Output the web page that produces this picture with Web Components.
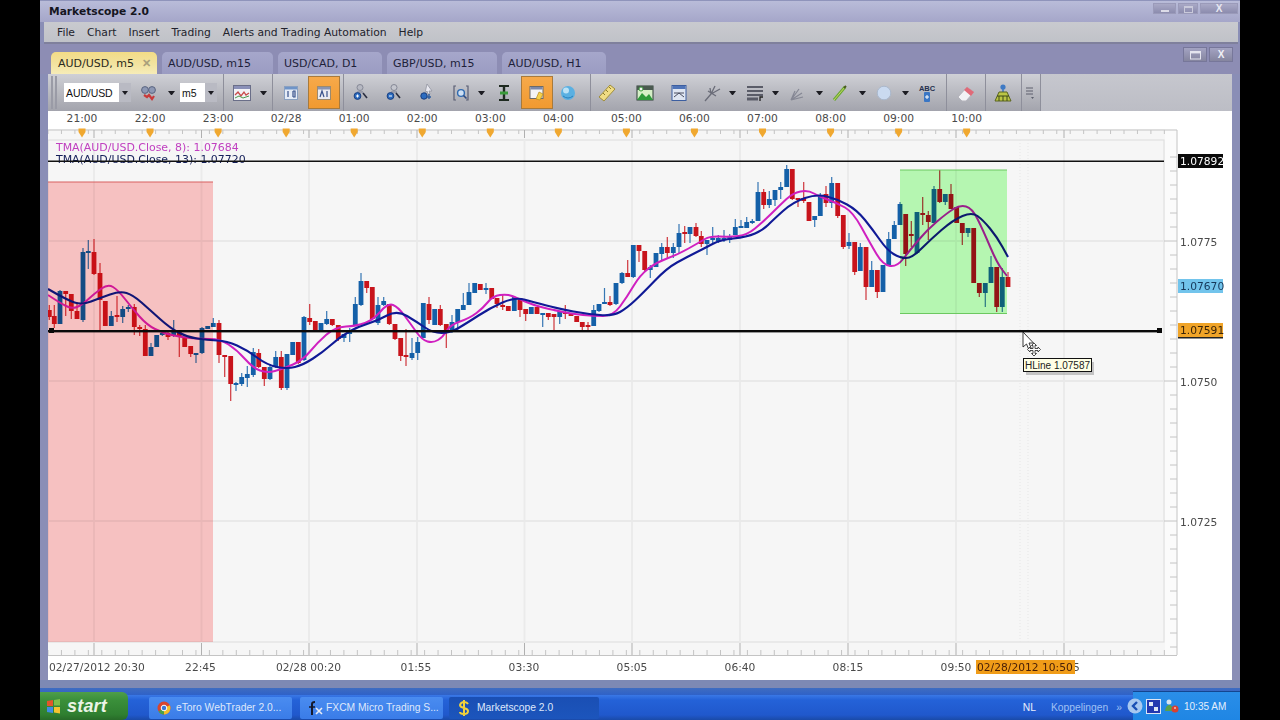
<!DOCTYPE html>
<html>
<head>
<meta charset="utf-8">
<title>Marketscope 2.0</title>
<style>
  html, body { margin: 0; height: 720px; overflow: hidden; background: #000; }
</style>
</head>
<body>
<ms-app>
  <ms-titlebar>Marketscope 2.0</ms-titlebar>
  <ms-menubar>
    <ms-menu>File</ms-menu><ms-menu>Chart</ms-menu><ms-menu>Insert</ms-menu><ms-menu>Trading</ms-menu><ms-menu>Alerts and Trading Automation</ms-menu><ms-menu>Help</ms-menu>
  </ms-menubar>
  <ms-tabstrip>
    <ms-tab active>AUD/USD, m5</ms-tab>
    <ms-tab style="width:111px">AUD/USD, m15</ms-tab>
    <ms-tab style="width:104px">USD/CAD, D1</ms-tab>
    <ms-tab style="width:110px">GBP/USD, m15</ms-tab>
    <ms-tab style="width:104px">AUD/USD, H1</ms-tab>
  </ms-tabstrip>
  <ms-toolbar></ms-toolbar>
  <ms-chart></ms-chart>
</ms-app>
<ms-taskbar></ms-taskbar>

<script>
/* eslint-disable no-undef */
const UI_FONT = `"DejaVu Sans", sans-serif`;

class MsApp extends HTMLElement {
  constructor() {
    super();
    this.attachShadow({ mode: 'open' }).innerHTML = `
      <style>
        :host { display: block; width: 1200px; height: 695px; margin: 0 40px; background: #8a8eb6; position: relative; }
        .foot { height: 15px; background: linear-gradient(#7d89b4 0, #7d89b4 8px, #3f6cc0 8px, #2f62c8 15px); }
      </style>
      <slot></slot>
      <div class="foot"></div>`;
  }
}

class MsTitlebar extends HTMLElement {
  constructor() {
    super();
    this.attachShadow({ mode: 'open' }).innerHTML = `
      <style>
        :host { display: flex; align-items: center; height: 22px; box-sizing: border-box; padding-left: 9px;
          background: linear-gradient(#b9bcd9, #a5a6c9); border-top: 1px solid #8f94bb;
          font: bold 10.7px ${UI_FONT}; color: #15151f; }
        .btns { margin-left: auto; margin-right: 2px; margin-top: -6px; display: flex; gap: 2px; }
        .b { height: 11px; background: linear-gradient(#a9a9c6, #8c8cae); border: 1px solid #9a9ab9; box-sizing: border-box;
          display: flex; align-items: center; justify-content: center; color: #e8e8f2; font: bold 10px "Liberation Sans", sans-serif; }
      </style>
      <slot></slot>
      <div class="btns">
        <div class="b" style="width:23px"><svg width="10" height="9"><rect x="1" y="6" width="8" height="2" fill="#dcdce8"/></svg></div>
        <div class="b" style="width:20px"><svg width="11" height="9"><rect x="1.5" y="2.5" width="8" height="6" fill="none" stroke="#c9c9da"/><rect x="1" y="2" width="9" height="2" fill="#c9c9da"/></svg></div>
        <div class="b" style="width:38px">X</div>
      </div>`;
  }
}

class MsMenubar extends HTMLElement {
  constructor() {
    super();
    this.attachShadow({ mode: 'open' }).innerHTML = `
      <style>
        :host { display: flex; align-items: center; height: 22px; box-sizing: border-box; margin: 0 2px 0 4px; padding-left: 13px; gap: 12px;
          background: linear-gradient(#c9cacf, #c0c2c8); border-bottom: 2px solid #7f809c; }
      </style>
      <slot></slot>`;
  }
}

class MsMenu extends HTMLElement {
  constructor() {
    super();
    this.attachShadow({ mode: 'open' }).innerHTML = `
      <style>:host { display: block; font: 10.75px ${UI_FONT}; color: #22232c; white-space: nowrap; }</style>
      <slot></slot>`;
  }
}

class MsTabstrip extends HTMLElement {
  constructor() {
    super();
    this.attachShadow({ mode: 'open' }).innerHTML = `
      <style>
        :host { display: flex; align-items: flex-end; height: 30px; padding-left: 11px; gap: 5px; background: #8d8db4; position: relative; }
        .ctl { margin-left: auto; margin-right: 7px; align-self: flex-start; margin-top: 3px; display: flex; gap: 2px; }
        .c { width: 24px; height: 15px; background: linear-gradient(#a3a3c2, #85859f); border: 1px solid #77779a; box-sizing: border-box;
          display: flex; align-items: center; justify-content: center; color: #f0f0f6; font: bold 10px "Liberation Sans", sans-serif; }
      </style>
      <slot></slot>
      <div class="ctl">
        <div class="c"><svg width="13" height="10"><rect x="1.5" y="1.5" width="10" height="7.5" fill="none" stroke="#e4e4ee"/><rect x="1" y="1" width="11" height="2.4" fill="#e4e4ee"/></svg></div>
        <div class="c">X</div>
      </div>`;
  }
}

class MsTab extends HTMLElement {
  constructor() {
    super();
    this.attachShadow({ mode: 'open' }).innerHTML = `
      <style>
        :host { display: flex; align-items: center; box-sizing: border-box; width: 106px; height: 22px; padding-left: 6px;
          border-radius: 5px 5px 0 0; background: linear-gradient(#a6a7cb, #9b9cc2); color: #1e1f3a; font: 11px ${UI_FONT}; white-space: nowrap; }
        :host([active]) { background: linear-gradient(#f3dc86, #f2e3a0 55%, #f6ecb8); padding-left: 7px; color: #2a2a20; }
        .x { display: none; margin-left: 8px; color: #a8a07c; font: bold 11px "Liberation Sans", sans-serif; }
        :host([active]) .x { display: block; }
      </style>
      <slot></slot><span class="x">✕</span>`;
  }
}

const ICONS = {
  glasses: `<circle cx="6" cy="7" r="3.4" fill="#8d98b4" stroke="#5a6480"/><circle cx="13" cy="7" r="3.4" fill="#8d98b4" stroke="#5a6480"/><path d="M5 12l3 2 2-2 3 4 2-3" fill="none" stroke="#c83a3a" stroke-width="2.2"/>`,
  linechart: `<rect x="1.5" y="2.5" width="17" height="15" fill="#f2f2f6" stroke="#6a6e88"/><rect x="2" y="3" width="16" height="3" fill="#8a90b8"/><path d="M3 12l3-3 3 4 3-4 2 3 3-2" fill="none" stroke="#c84a4a" stroke-width="1.3"/><path d="M3 15l4-2 4 2 6-2" fill="none" stroke="#4a9a4a"/>`,
  boxb: `<rect x="3.5" y="3.5" width="13" height="13" fill="#e6ecf6" stroke="#8aa0c0"/><rect x="4" y="4" width="12" height="2.5" fill="#6f94c8"/><path d="M7 8v6M12 8v6M12 8h2v6h-2" fill="none" stroke="#37508a" stroke-width="1.2"/>`,
  boxa: `<rect x="3.5" y="3.5" width="13" height="13" fill="#eaeaf0" stroke="#9a8a70"/><rect x="4" y="4" width="12" height="2.5" fill="#8a94b0"/><path d="M6 14l2-6 2 6M13 8v6" fill="none" stroke="#37508a" stroke-width="1.2"/>`,
  zoomin: `<circle cx="9" cy="4.5" r="3" fill="#b6b8c2" stroke="#858896"/><path d="M6 9h6" stroke="#9a9caa" stroke-width="2"/><circle cx="6.5" cy="13" r="3.4" fill="#2c6cc0" stroke="#1a3f80"/><path d="M5 13h3M6.500 11.500v3" stroke="#fff"/><path d="M12 10l4 5" stroke="#2a2d40" stroke-width="1.6"/>`,
  zoomout: `<circle cx="10" cy="4.5" r="3" fill="#c4c6ce" stroke="#858896"/><path d="M7 9h6" stroke="#9a9caa" stroke-width="2"/><circle cx="6.5" cy="13" r="3.4" fill="#2c6cc0" stroke="#1a3f80"/><path d="M5 13h3" stroke="#fff"/><path d="M12 10l4 5" stroke="#2a2d40" stroke-width="1.6"/>`,
  pointer: `<path d="M10 1l5 7-3 0 1 3-2 0-1-3-2 2z" fill="#e8e8f0" stroke="#8a8c9a" stroke-width=".7"/><circle cx="7" cy="13" r="3.2" fill="#2c6cc0" stroke="#1a3f80"/><path d="M12 11v5M10 14h4" stroke="#2f5ea0" stroke-width="1.4"/>`,
  bracket: `<path d="M5 3H3v14h2M15 3h2v14h-2" fill="none" stroke="#5a5e74" stroke-width="1.2"/><circle cx="10" cy="10" r="3.4" fill="#cfe0f4" stroke="#2f6ab0" stroke-width="1.4"/><path d="M12.500 12.500l3 3" stroke="#2f4a80" stroke-width="1.6"/>`,
  ibeam: `<path d="M5 3h10M5 17h10" stroke="#1e2a20" stroke-width="2"/><path d="M10 3v14" stroke="#1e2a20" stroke-width="2.4"/><path d="M6 10h8" stroke="#3a9a3a" stroke-width="3"/>`,
  note: `<rect x="3" y="3.500" width="13" height="12" fill="#f4f4f4" stroke="#6a6a6a"/><rect x="3.500" y="4" width="12" height="2.500" fill="#7d88a8"/><path d="M9 16l3-7 4 2-3 6z" fill="#f6d24c" stroke="#b88a18" stroke-width=".7"/>`,
  globe: `<circle cx="10" cy="10" r="7" fill="#5ab0e2"/><circle cx="8" cy="7.500" r="3" fill="#bce2f6"/><path d="M5 13q5 4 10 0" stroke="#2b80bc" fill="none"/>`,
  ruler: `<path d="M2 14L13 2l5 4L7 18z" fill="#f0dc84" stroke="#a08e3c"/><path d="M6 10l2 2M9 7l2 2M12 4l2 2" stroke="#8e7c2c"/>`,
  picture: `<rect x="2" y="3" width="16" height="14" fill="#d6efc8" stroke="#2d3e34"/><rect x="2" y="3" width="16" height="4" fill="#4a5a50"/><path d="M2 17l5-7 4 4 3-3 4 6z" fill="#2f9a3c"/><circle cx="6" cy="6" r="2" fill="#f4f4f4" stroke="#3a9a3a"/>`,
  winchart: `<rect x="3" y="2.500" width="14" height="15" fill="#dfe6f2" stroke="#3c5ea0"/><rect x="3.500" y="3" width="13" height="3" fill="#4f74b8"/><path d="M5 14l5-4 5 4M5 10h10" fill="none" stroke="#4a4e60"/>`,
  fork: `<path d="M3 18L9 11M9 11L8 5M9 11L13 3M9 11L18 6M6 8L14 13" fill="none" stroke="#6a6c78" stroke-width="1.3"/>`,
  lines: `<path d="M2 4h16M2 8h16M2 12h16" stroke="#5a5c68" stroke-width="2"/><path d="M2 16h11" stroke="#5a5c68" stroke-width="3"/><path d="M15 18v-4h3" fill="none" stroke="#222" stroke-width="1.3"/>`,
  fan: `<path d="M4 17L8 8M4 17L12 6M4 17L15 10M4 17L16 14" fill="none" stroke="#858794" stroke-width="1.2"/>`,
  pencil: `<path d="M4 17L15 4" stroke="#6aa834" stroke-width="3"/><path d="M4 17L15 4" stroke="#c6d860" stroke-width="1"/><path d="M14 5l2-2" stroke="#485a20" stroke-width="2"/>`,
  ellipse: `<circle cx="10" cy="10" r="6.800" fill="#cadaf0" stroke="#aab8cc"/>`,
  abc: `<text x="10" y="8" text-anchor="middle" font-family="Liberation Sans" font-weight="bold" font-size="7.500" fill="#26304e">ABC</text><rect x="7" y="9" width="6" height="10" rx="1" fill="#3a76c4"/><path d="M8 14h4M10 12v4" stroke="#fff"/>`,
  eraser: `<path d="M2 14L11 4l7 5-8 9H6z" fill="#f2f2f4" stroke="#b4b4bc"/><path d="M8 7l3-3 7 5-3 4z" fill="#e06a78"/>`,
  pyramid: `<circle cx="10" cy="4" r="2.600" fill="#3f7ac4"/><path d="M10 6v3" stroke="#3f7ac4" stroke-width="1.600"/><path d="M6 9h8l4 9H2z" fill="#bcc644" stroke="#5a6420"/><path d="M6 13v5M10 13v5M14 13v5M4 13h12" stroke="#3e4a18"/>`,
  list: `<path d="M6 5h7M6 8h7M6 11h7" stroke="#5c5e6c"/><path d="M11 14h3l-1.500 2z" fill="#5c5e6c"/>`,
};

// centre x of each toolbar item on the page
const TOOLS = [
  ['grip', 52], ['grip', 56],
  ['combo', 97.5, 'AUD/USD', 67], ['icon', 149, 'glasses'], ['caret', 171],
  ['combo', 198.5, 'm5', 37], ['sep', 223],
  ['icon', 242, 'linechart'], ['caret', 263], ['sep', 272],
  ['icon', 291, 'boxb'], ['active', 324, 'boxa'], ['sep', 343],
  ['icon', 361, 'zoomin'], ['icon', 394, 'zoomout'], ['icon', 427, 'pointer'],
  ['icon', 461, 'bracket'], ['caret', 481], ['icon', 504, 'ibeam'],
  ['active', 537, 'note'], ['icon', 568, 'globe'], ['sep', 590],
  ['icon', 607, 'ruler'], ['icon', 645, 'picture'], ['icon', 679, 'winchart'],
  ['icon', 712, 'fork'], ['caret', 732], ['icon', 755, 'lines'], ['caret', 775],
  ['icon', 797, 'fan'], ['caret', 819], ['icon', 840, 'pencil'], ['caret', 862],
  ['icon', 884, 'ellipse'], ['caret', 905], ['icon', 927, 'abc'], ['sep', 946],
  ['icon', 966, 'eraser'], ['sep', 985], ['icon', 1003, 'pyramid'], ['sep', 1021],
  ['icon', 1030, 'list'], ['sep', 1040],
];
const TOOL_W = { grip: 2, icon: 20, active: 32, caret: 7, sep: 1 };

class MsToolbar extends HTMLElement {
  constructor() {
    super();
    let right = 48;
    const items = TOOLS.map(([kind, cx, arg, w]) => {
      const width = kind === 'combo' ? w : TOOL_W[kind];
      const left = cx - width / 2;
      const style = `margin-left:${left - right}px;width:${width}px`;
      right = left + width;
      if (kind === 'combo') return `<div class="combo" style="${style}"><span>${arg}</span><i></i></div>`;
      if (kind === 'icon' || kind === 'active') {
        return `<div class="${kind}" style="${style}"><svg width="20" height="20" viewBox="0 0 20 20">${ICONS[arg]}</svg></div>`;
      }
      return `<div class="${kind}" style="${style}"></div>`;
    }).join('');
    this.attachShadow({ mode: 'open' }).innerHTML = `
      <style>
        :host { display: block; height: 37px; margin: 0 8px; background: linear-gradient(#c6c7ce, #bcbdc5); }
        .row { display: flex; align-items: center; height: 37px; width: 992px; background: linear-gradient(#cfd0d6, #b4b5bc 60%, #a3a4ad); }
        .row > * { flex: none; box-sizing: border-box; }
        .grip { height: 33px; background: #9a9ba6; }
        .sep { align-self: stretch; background: #8e8f9b; }
        .icon { height: 20px; display: flex; justify-content: center; }
        .active { height: 33px; display: flex; align-items: center; justify-content: center; background: linear-gradient(#f6a94a, #f19a30); border: 1px solid #a87a3c; }
        .caret { height: 0; border-left: 3.5px solid transparent; border-right: 3.500px solid transparent; border-top: 4px solid #1c1c22; }
        .combo { height: 19px; background: #fff; display: flex; align-items: center; font: 10.5px "Liberation Sans", sans-serif; color: #111; padding-left: 2px; position: relative; }
        .combo span { letter-spacing: -.1px; }
        .combo i { position: absolute; right: 0; top: 0; bottom: 0; width: 12px; background: #b9bac3; }
        .combo i::after { content: ''; position: absolute; left: 3px; top: 8px; border-left: 3px solid transparent; border-right: 3px solid transparent; border-top: 4px solid #1c1c22; }
        svg { display: block; overflow: visible; }
      </style>
      <div class="row">${items}</div>`;
  }
}

// x, body top, body bottom, wick top, wick bottom, r(ed)/b(lue)
const CANDLES = [
  [49.3,310,317,305,320,'r'],[54.3,316,324,305,328,'r'],[60,291,324,290,324,'b'],[65.7,291,294,291,316,'r'],
  [71.3,294,311,294,319,'r'],[77,311,319,302,319,'r'],[83,252,320,248,322,'b'],[88.3,251,253,240,269,'b'],
  [94,252,274,239,275,'r'],[100,273,300,263,330,'r'],[105.3,301,326,301,326,'r'],[111.3,316,326,311,326,'b'],
  [117,315,317,296,322,'r'],[122.7,309,317,306,323,'b'],[128.3,307,309,305,312,'b'],[134.3,307,327,304,335,'r'],
  [139.7,327,329,325,336,'r'],[145.3,329,356,325,356,'r'],[151,347,356,343,356,'b'],[156.7,335,347,335,347,'b'],
  [162.3,333,335,333,336,'b'],[168,333,337,332,340,'r'],[173.7,331,335,320,337,'b'],[179.300,332,336,330,357,'r'],
  [184.700,337,347,337,347,'r'],[190.700,346,354,346,357,'r'],[196,353,355,353,363,'b'],[202,328,353,327,354,'b'],
  [207.700,326,329,326,329,'b'],[213.300,323,327,318,327,'b'],[219,323,355,320,363,'r'],[224.700,355,357,355,377,'r'],
  [230.700,356,384,356,401,'r'],[236,383,385,382,391,'b'],[241.700,377,384,373,386,'b'],[247.300,374,378,366,387,'b'],
  [253.300,352,375,348,377,'b'],[258.700,353,367,349,368,'r'],[264.300,367,379,367,386,'r'],[270,367,379,364,380,'b'],
  [275.700,357,367,351,368,'b'],[281.300,357,388,351,390,'r'],[287,354,388,354,390,'b'],[292.700,342,355,342,355,'b'],
  [298.300,342,363,342,364,'r'],[304,317,360,316,361,'b'],[309.700,318,322,304,325,'r'],[315.300,321,330,321,330,'r'],
  [321,323,330,323,331,'b'],[326.700,319,324,311,325,'b'],[332.300,319,325,319,326,'r'],[338.300,325,339,325,341,'r'],
  [344,334,338,334,342,'b'],[349.700,330,334,328,342,'b'],[355.300,304,325,297,326,'b'],[361,281,305,273,306,'b'],
  [366.700,281,288,281,293,'r'],[372.300,287,319,287,320,'r'],[378,305,323,297,325,'b'],[383.700,301,305,297,306,'b'],
  [389.300,304,324,304,325,'r'],[395,324,339,324,340,'r'],[400.700,338,356,338,361,'r'],[406,355,357,329,366,'r'],
  [412,353,358,338,360,'b'],[417.700,342,353,337,360,'b'],[423.300,303,338,303,338,'b'],[429,304,320,297,324,'r'],
  [434.700,309,325,309,325,'b'],[440.300,309,325,305,326,'r'],[446.300,324,331,324,348,'r'],[452,322,330,315,333,'b'],
  [457.700,309,322,309,330,'b'],[463.300,305,310,293,310,'b'],[469,292,305,283,305,'b'],[474.700,283,293,283,293,'b'],
  [480.300,284,290,284,290,'r'],[486,288,290,283,294,'b'],[491.700,288,299,288,299,'r'],[497,298,304,298,308,'r'],
  [502.700,305,307,295,310,'r'],[508.300,306,311,306,311,'r'],[514.300,297,311,297,311,'b'],[520,298,310,298,317,'r'],
  [525.700,309,314,309,321,'r'],[531.300,307,314,307,314,'b'],[537,307,314,307,314,'r'],[542.700,313,315,313,327,'b'],
  [548.300,313,317,313,320,'r'],[554,314,317,314,332,'r'],[559.700,311,317,311,324,'b'],[565.300,312,314,305,319,'r'],
  [571,313,316,313,316,'r'],[576.700,316,322,316,322,'r'],[582.300,322,327,322,330,'r'],[588,325,327,322,330,'r'],
  [593.700,310,326,305,326,'b'],[599,304,311,304,312,'b'],[604.500,302,304,288,304,'b'],[610,302,305,296,306,'r'],
  [616,283,304,283,305,'b'],[622,273,283,272,284,'b'],[627.700,273,277,260,277,'r'],[633.300,245,277,245,278,'b'],
  [639,245,251,245,262,'r'],[644.700,251,270,251,272,'r'],[650.300,267,270,265,278,'b'],[656,253,267,253,267,'b'],
  [661.700,247,254,243,260,'b'],[667.300,247,253,237,258,'r'],[673.300,247,253,243,258,'b'],[679,233,247,224,253,'b'],
  [684.700,232,234,226,243,'r'],[690,227,234,227,243,'b'],[696,227,236,223,237,'r'],[701.300,236,244,231,247,'r'],
  [707,240,244,240,255,'b'],[712.700,238,240,227,243,'b'],[718.300,238,241,235,243,'b'],[724,238,240,230,242,'b'],
  [729.700,236,240,234,243,'b'],[735.300,227,235,219,235,'b'],[741,226,228,220,228,'b'],[746.700,222,228,217,228,'b'],
  [752.300,221,223,219,224,'b'],[758,192,221,182,221,'b'],[763.700,192,205,189,209,'r'],[769.300,199,205,191,208,'b'],
  [775,190,200,190,206,'b'],[780.700,187,190,182,199,'b'],[786.700,169,187,165,187,'b'],[792.300,169,199,169,200,'r'],
  [798,198,200,198,207,'r'],[803.700,198,201,182,203,'r'],[809,202,221,202,221,'r'],[814.700,216,220,216,227,'b'],
  [820.300,196,216,193,216,'b'],[826,194,203,186,207,'r'],[831.700,183,203,177,208,'b'],[837.700,183,216,183,218,'r'],
  [843.300,215,247,215,249,'r'],[849,242,246,233,249,'b'],[854.700,242,272,242,275,'r'],[860.300,247,271,243,271,'b'],
  [866,247,287,247,300,'r'],[871.700,270,287,261,287,'b'],[877.300,270,292,270,298,'r'],[883,265,292,265,292,'b'],
  [888.700,239,265,232,265,'b'],[894.300,225,239,221,239,'b'],[900,204,225,202,225,'b'],[905.700,214,254,214,266,'r'],
  [911.300,234,236,221,247,'r'],[917,212,253,212,254,'b'],[922.700,213,215,197,225,'r'],[928.300,215,222,211,240,'r'],
  [934,189,223,186,223,'b'],[939.700,189,202,170,203,'r'],[945.300,194,202,194,205,'b'],[951,194,209,184,209,'r'],
  [956.700,207,223,207,223,'r'],[962.300,223,233,223,245,'r'],[968,228,233,228,237,'b'],[973.700,228,283,228,283,'r'],
  [979.300,283,293,283,297,'r'],[985.300,283,293,283,307,'b'],[991,267,283,256,283,'b'],[996.700,267,307,267,312,'r'],
  [1002.300,277,307,268,312,'b'],[1008,277,287,272,287,'r'],
];

const MA_FAST = [[48,295],[60,303],[72,309],[82,305],[95,293],[108,284],[118,290],[132,308],[147,325],[163,333],[180,337],[200,339],[220,339],[237,350],[253,368],[267,373],[283,369],[303,360],[317,343],[335,327],[357,326],[373,320],[388,303],[398,307],[410,323],[422,340],[433,343],[443,337],[450,325],[470,318],[483,308],[493,296],[507,294],[517,298],[533,305],[553,310],[573,314],[593,316],[613,316],[627,297],[640,275],[657,262],[677,255],[700,242],[710,236],[730,237],[747,235],[763,222],[780,205],[793,193],[808,190],[820,197],[837,203],[853,212],[870,243],[883,265],[897,267],[910,250],[927,230],[947,213],[960,205],[972,208],[983,230],[997,263],[1007,276]];
const MA_SLOW = [[48,289],[67,300],[82,305],[100,298],[120,291],[133,295],[150,310],[170,328],[187,337],[207,340],[227,341],[247,350],[267,365],[287,369],[303,365],[323,352],[340,337],[357,327],[377,321],[397,310],[417,322],[433,333],[450,333],[467,323],[490,308],[515,297],[533,302],[560,309],[587,314],[613,316],[627,308],[643,293],[667,268],[687,257],[707,247],[720,240],[747,237],[763,230],[773,220],[793,202],[817,194],[837,199],[857,210],[873,230],[887,250],[900,258],[912,258],[930,240],[953,220],[972,212],[983,220],[997,237],[1008,257]];

function smoothPath(pts) {
  let d = `M${pts[0][0]} ${pts[0][1]}`;
  for (let i = 1; i < pts.length - 1; i++) {
    const mx = (pts[i][0] + pts[i + 1][0]) / 2;
    const my = (pts[i][1] + pts[i + 1][1]) / 2;
    d += `Q${pts[i][0]} ${pts[i][1]} ${mx} ${my}`;
  }
  const last = pts[pts.length - 1];
  return d + `L${last[0]} ${last[1]}`;
}

class MsChart extends HTMLElement {
  constructor() {
    super();
    const gridX = [94, 201.500, 309, 417, 524.500, 632, 740, 848, 956, 1064];
    const gridY = [241, 381, 521];
    const topLabels = ['21:00', '22:00', '23:00', '02/28', '01:00', '02:00', '03:00', '04:00', '05:00', '06:00', '07:00', '08:00', '09:00', '10:00'];
    const botLabels = [[200.500, '22:45'], [308.500, '02/28 00:20'], [416, '01:55'], [524, '03:30'], [632, '05:05'], [740, '06:40'], [848, '08:15'], [956, '09:50']];

    let grid = '';
    gridX.forEach(x => { grid += `<rect x="${x - 1}" y="140" width="2" height="502" fill="#ebebeb"/>`; });
    gridY.forEach(y => { grid += `<rect x="48" y="${y - 1}" width="1116" height="2" fill="#e9e9e9"/>`; });

    let rulers = '';
    for (let x = 48; x < 1177; x += 13.450) {
      rulers += `<path d="M${x} 130v4M${x} 650v5" stroke="#c4c4c4"/>`;
    }
    gridX.forEach(x => { rulers += `<path d="M${x} 130v8M${x} 643v12" stroke="#b0b0b0"/>`; });
    for (let y = 157; y < 650; y += 14) {
      const major = (y - 241) % 140 === 0;
      rulers += `<path d="M${major ? 1164 : 1170} ${y}H1177" stroke="#c4c4c4"/>`;
    }
    topLabels.forEach((t, i) => {
      const x = 82 + i * 68.050;
      rulers += `<text x="${x}" y="122" text-anchor="middle">${t}</text>`;
      rulers += `<path d="M${x - 3.500} 128.500h7v3.500l-3.500 5.500-3.500-5.500z" fill="#f0a830"/>`;
    });

    const candles = CANDLES.map(([x, t, b, wt, wb, c]) => {
      const col = c === 'r' ? '#c8141c' : '#1460a8';
      return `<rect x="${x - 0.6}" y="${wt}" width="1.200" height="${wb - wt}" fill="${col}" opacity=".85"/>` +
        `<rect x="${x - 2.400}" y="${t}" width="4.800" height="${Math.max(b - t, 1.500)}" fill="${col}"/>`;
    }).join('');

    this.attachShadow({ mode: 'open' }).innerHTML = `
      <style>
        :host { display: block; width: 1184px; height: 569px; margin-left: 8px; }
        svg { display: block; font: 10.700px ${UI_FONT}; fill: #4a4a4a; }
        .zone { mix-blend-mode: multiply; }
        .soft { filter: blur(.3px); }
      </style>
      <svg width="1184" height="569" viewBox="48 111 1184 569">
        <rect x="48" y="111" width="1184" height="569" fill="#fff"/>
        <rect x="48" y="129" width="1129" height="527" fill="#f6f6f6"/>
        <rect x="48" y="140" width="1116" height="502" fill="#f6f6f6" stroke="#dcdcdc"/>
        <rect x="1165" y="129" width="12" height="527" fill="#fbfbfb"/>
        ${grid}
        <path d="M1020 140V642M1028 140V642" stroke="#e6e6e6" stroke-dasharray="1 2"/>
        <path d="M48 130H1177M48 655.500H1177M1177 130V655" stroke="#c4c4c4" fill="none"/>
        ${rulers}
        <g class="soft">
          ${candles}
          <path d="${smoothPath(MA_FAST)}" fill="none" stroke="#d020c0" stroke-width="2"/>
          <path d="${smoothPath(MA_SLOW)}" fill="none" stroke="#101a96" stroke-width="2.100"/>
        </g>
        <rect class="zone" x="48" y="182" width="165" height="460" fill="#ffc8c8"/>
        <rect x="48" y="181.500" width="165" height="1" fill="#d86060"/>
        <rect class="zone" x="900" y="170" width="107" height="144" fill="#bcffb8"/>
        <path d="M900 170H1007M900 313.500H1007" stroke="#6cc860"/>
        <text x="56" y="151" fill="#c040c0" style="font-size:10.950px">TMA(AUD/USD.Close, 8): 1.07684</text>
        <text x="56" y="163" fill="#15205a" style="font-size:10.950px">TMA(AUD/USD.Close, 13): 1.07720</text>
        <rect x="48" y="160.500" width="1116" height="1.500" fill="#111"/>
        <rect x="48" y="330" width="1113" height="2.400" fill="#0a0a0a"/>
        <rect x="49" y="328" width="5" height="5" fill="#0a0a0a"/>
        <rect x="1157" y="328" width="5" height="5" fill="#0a0a0a"/>
        <rect x="1178" y="154" width="45" height="14" fill="#0a0a0a"/>
        <text x="1180" y="165" fill="#fff">1.07892</text>
        <text x="1180" y="245.500">1.0775</text>
        <rect x="1178" y="279" width="45" height="14" fill="#72c4ec"/>
        <text x="1180" y="290" fill="#16385a">1.07670</text>
        <rect x="1178" y="323" width="45" height="14" fill="#f0a428"/>
        <rect x="1178" y="337" width="45" height="1.500" fill="#222"/>
        <text x="1180" y="334" fill="#3a2408">1.07591</text>
        <text x="1180" y="385.500">1.0750</text>
        <text x="1180" y="525.500">1.0725</text>
        <text x="49" y="671">02/27/2012 20:30</text>
        ${botLabels.map(([x, t]) => `<text x="${x}" y="671" text-anchor="middle">${t}</text>`).join('')}
        <text x="1073" y="671">5</text>
        <rect x="976" y="660" width="99" height="14" fill="#f09c18"/>
        <text x="977" y="671" fill="#4a2008">02/28/2012 10:50</text>
        <path d="M1023 332v15l3.500-3 2.500 6 2.500-1-2.500-6h4.500z" fill="#fff" stroke="#222" stroke-width=".9"/>
        <path d="M1034 343l2.500 2.500h-1.500v3h3v-1.500l2.500 2.500-2.500 2.500v-1.500h-3v3h1.500l-2.500 2.500-2.500-2.500h1.500v-3h-3v1.500l-2.500-2.500 2.500-2.500v1.500h3v-3h-1.500z" fill="#fff" stroke="#222" stroke-width=".8"/>
        <rect x="1026" y="362" width="68" height="13" fill="#9a9a9a" opacity=".55"/>
        <rect x="1023.500" y="358.500" width="68" height="13" fill="#ffffe6" stroke="#111"/>
        <text x="1025" y="369" fill="#222" style="font:10px 'Liberation Sans', sans-serif">HLine 1.07587</text>
      </svg>`;
  }
}

class MsTaskbar extends HTMLElement {
  constructor() {
    super();
    this.attachShadow({ mode: 'open' }).innerHTML = `
      <style>
        :host { display: flex; align-items: center; width: 1200px; height: 25px; margin: 0 40px; position: absolute; left: 0; top: 695px;
          background: linear-gradient(#3a78e6, #2462d8 20%, #2058cc 80%, #1a4aa8); color: #dfe8fb; font: 10.300px "Liberation Sans", sans-serif; }
        .start { width: 88px; height: 28px; margin-top: -3px; box-sizing: border-box; padding-left: 6px; display: flex; align-items: center; gap: 5px;
          background: linear-gradient(#4f9e4a, #3a8f3a 30%, #2f7f30 80%, #276a28); border-radius: 0 6px 6px 0; color: #eaf4e6;
          font: italic bold 18px "Liberation Sans", sans-serif; letter-spacing: .2px; flex: none; }
        .task { height: 22px; display: flex; align-items: center; gap: 5px; box-sizing: border-box; padding-left: 8px; border-radius: 2px;
          background: linear-gradient(#4a8cf0, #3a7ce8); flex: none; white-space: nowrap; overflow: hidden; }
        .task.on { background: linear-gradient(#1a4fb4, #1c55bc); }
        .tray { height: 29px; margin-top: -4px; width: 107px; box-sizing: border-box; display: flex; align-items: center; gap: 3px;
          background: linear-gradient(#2a8ee8, #1f86e4); border-top: 1px solid #14458f; flex: none; font-size: 10px; }
        .links { display: flex; align-items: center; flex: none; margin-left: auto; }
        svg { display: block; flex: none; }
      </style>
      <div class="start"><svg width="16" height="16" viewBox="0 0 16 16"><path d="M1 3l6-1v6H1z" fill="#e2562a"/><path d="M8 2l6-1v6.500H8z" fill="#7ec04a"/><path d="M1 9h6v6l-6-1z" fill="#3f8ce4"/><path d="M8 9h6v6.500l-6-1z" fill="#f4c430"/></svg>start</div>
      <div class="task" style="margin-left:21px;width:143px"><svg width="14" height="14" viewBox="0 0 14 14"><circle cx="7" cy="7" r="6.500" fill="#d8452e"/><path d="M7 7L1.500 10.500A6.500 6.500 0 0 0 7 13.500z" fill="#4aa04a"/><path d="M7 7l5.800-2.800A6.500 6.500 0 0 1 7 13.500z" fill="#f2c02e"/><circle cx="7" cy="7" r="2.800" fill="#3a78d8" stroke="#fff"/></svg>eToro WebTrader 2.0...</div>
      <div class="task" style="margin-left:8px;width:143px;gap:2px"><svg width="16" height="16" viewBox="0 0 16 16"><path d="M4 15V4q0-2 3-2" fill="none" stroke="#151a2c" stroke-width="2"/><path d="M1 7h6" stroke="#151a2c" stroke-width="1.500"/><path d="M8 8l6 6M14 8l-6 6" stroke="#e8ecf4" stroke-width="1.600"/></svg>FXCM Micro Trading S...</div>
      <div class="task on" style="margin-left:6px;width:150px;padding-left:9px"><svg width="12" height="18" viewBox="0 0 12 18"><path d="M10 5Q9 3 6 3T2 6q0 2 4 3t4 3q0 3-4 3T2 13M6 1v16" fill="none" stroke="#f2d23a" stroke-width="2"/></svg><span style="margin-left:2px">Marketscope 2.0</span></div>
      <div class="links"><span style="margin-right:15px;color:#e8eefc">NL</span><span style="color:#9fc0f4">Koppelingen</span><span style="margin-left:8px;margin-right:11px;color:#9fc0f4">»</span></div>
      <div class="tray">
        <svg width="16" height="16" viewBox="0 0 16 16" style="margin-left:-6px"><circle cx="8" cy="8" r="7.500" fill="#a8c8f0"/><path d="M10 4L6 8l4 4" fill="none" stroke="#1a4fb4" stroke-width="2.400"/></svg>
        <svg width="15" height="15" viewBox="0 0 15 15"><rect x=".5" y=".5" width="14" height="14" fill="#2338b0" stroke="#dfe6f6"/><path d="M3 3h4v4H3zM8 8h4v4H8z" fill="#dfe6f6"/></svg>
        <svg width="15" height="16" viewBox="0 0 15 16"><circle cx="5" cy="4" r="2.500" fill="#d8e4f0"/><path d="M1 13q1-7 5-6 3 1 2 6z" fill="#5aa04a"/><circle cx="11" cy="11" r="3.500" fill="#d84030"/><path d="M11 9v2" stroke="#fff"/></svg>
        <span style="margin-left:2px;white-space:nowrap;color:#e4eefc">10:35 AM</span>
      </div>`;
  }
}

customElements.define('ms-app', MsApp);
customElements.define('ms-titlebar', MsTitlebar);
customElements.define('ms-menubar', MsMenubar);
customElements.define('ms-menu', MsMenu);
customElements.define('ms-tabstrip', MsTabstrip);
customElements.define('ms-tab', MsTab);
customElements.define('ms-toolbar', MsToolbar);
customElements.define('ms-chart', MsChart);
customElements.define('ms-taskbar', MsTaskbar);
</script>
</body>
</html>
